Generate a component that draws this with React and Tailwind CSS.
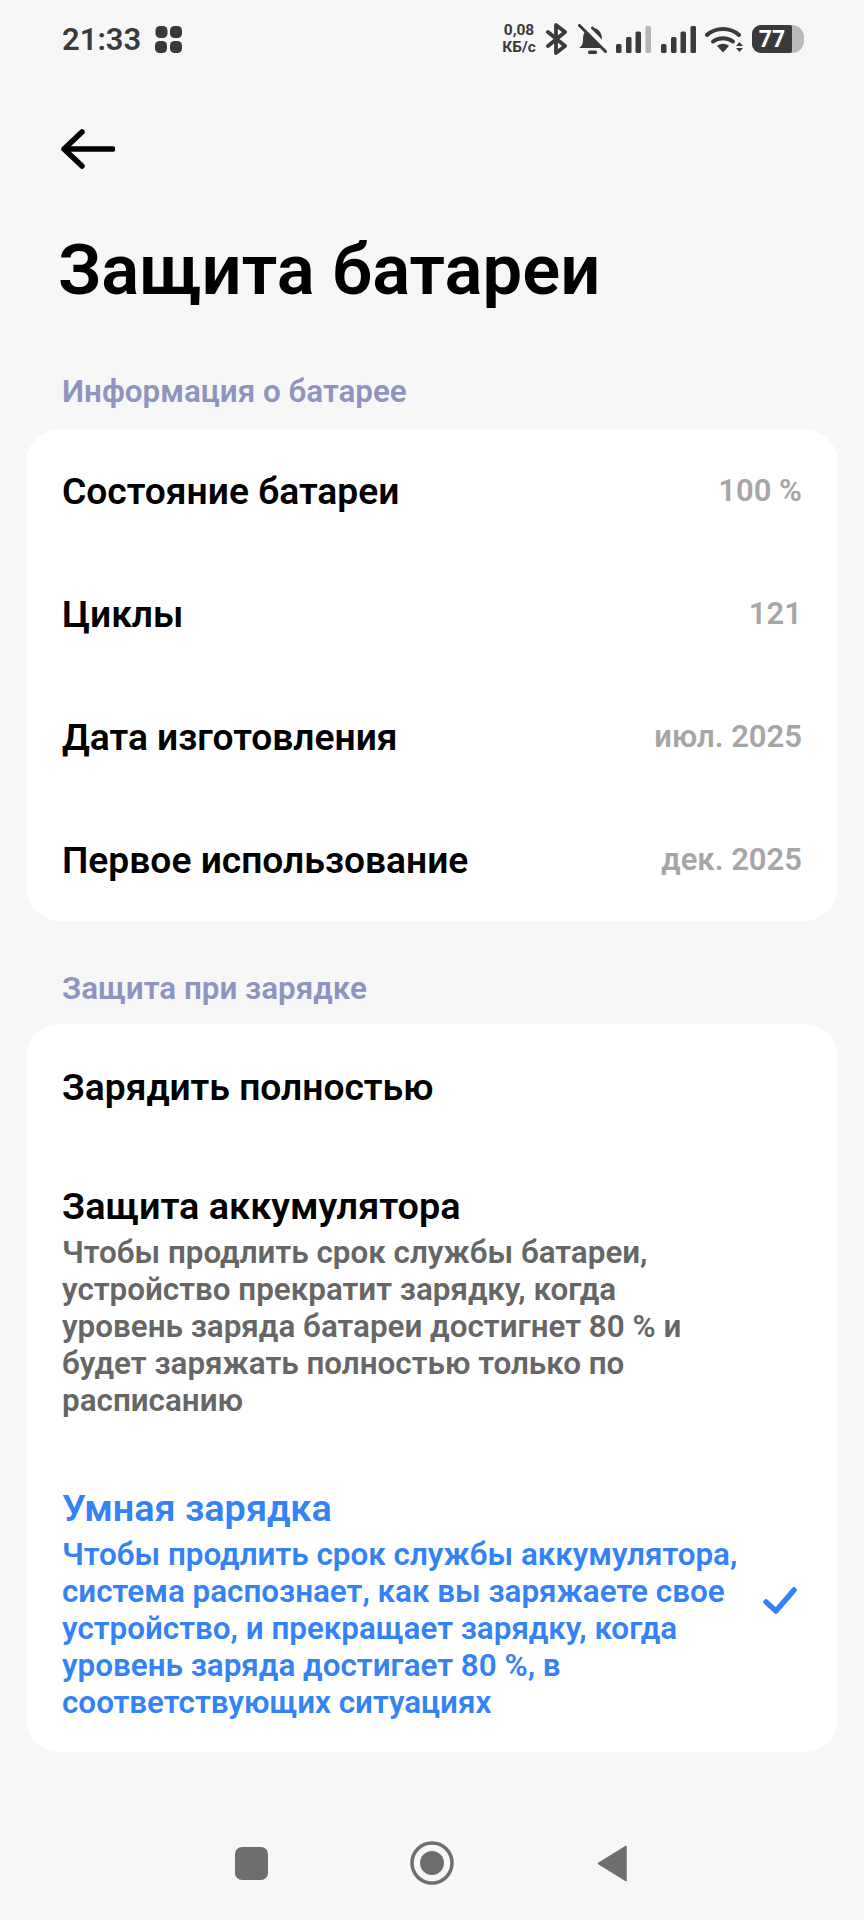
const rows = [
  ["Состояние батареи", "100 %"],
  ["Циклы", "121"],
  ["Дата изготовления", "июл. 2025"],
  ["Первое использование", "дек. 2025"],
];

function Signal({ dim }) {
  return (
    <svg width="35" height="27" viewBox="0 0 35 27">
      <rect x="0" y="18" width="5.500" height="9" rx="1.500" fill="#3a3a3a" />
      <rect x="10" y="11" width="5.500" height="16" rx="1.500" fill="#3a3a3a" />
      <rect x="19.500" y="5.500" width="5.500" height="21.500" rx="1.500" fill="#3a3a3a" />
      <rect x="29.500" y="0" width="5.500" height="27" rx="1.500" fill={dim ? "#b5b5b5" : "#3a3a3a"} />
    </svg>
  );
}

function StatusBar() {
  return (
    <div className="flex h-[78px] items-center justify-between pl-[62px] pr-[60px] text-[#3a3a3a]">
      <div className="flex items-center gap-[14px]">
        <span className="text-[31px] font-semibold leading-none">21:33</span>
        <svg width="27" height="27" viewBox="0 0 27 27" fill="#3a3a3a">
          <rect x="0.500" y="0" width="12" height="12" rx="4.500" />
          <rect x="15" y="0" width="12" height="12" rx="4.500" />
          <rect x="0" y="15" width="12" height="12" rx="4.500" />
          <rect x="15" y="15" width="12" height="12" rx="4.500" />
        </svg>
      </div>
      <div className="flex items-center">
        <div className="flex w-[36px] flex-col items-center text-[15.500px] font-bold leading-[17px]">
          <span>0,08</span>
          <span>КБ/с</span>
        </div>
        <svg className="ml-[9px]" width="21" height="32" viewBox="0 0 21 32" fill="none" stroke="#3a3a3a" strokeWidth="3.800" strokeLinejoin="round" strokeLinecap="round">
          <path d="M2 9l17 14-9 7V2l9 7L2 23" />
        </svg>
        <svg className="ml-[11px]" width="29" height="31" viewBox="0 0 29 31">
          <path d="M1 24c3-2 4-4 4-9 0-6 3-10 8-11 0-2 3-2 3 0 5 1 8 5 8 11 0 5 1 7 4 9z" fill="#3a3a3a" />
          <rect x="10" y="26.500" width="9" height="3.500" rx="1.500" fill="#3a3a3a" />
          <path d="M2 -2L30 26" stroke="#f7f7f7" strokeWidth="6.500" />
          <path d="M1.500 1.500L27.500 27.500" stroke="#3a3a3a" strokeWidth="3" strokeLinecap="round" />
        </svg>
        <div className="ml-[9px]"><Signal dim /></div>
        <div className="ml-[10px]"><Signal /></div>
        <svg className="ml-[9px]" width="38" height="27" viewBox="0 0 38 27" fill="none">
          <path d="M2 9c9-8 23-8 32 0" stroke="#3a3a3a" strokeWidth="4" strokeLinecap="round" />
          <path d="M8 15.500c6-4.500 14-4.500 20 0" stroke="#3a3a3a" strokeWidth="4" strokeLinecap="round" />
          <path d="M12 20c4-3 8-3 12 0l-6 6.500z" fill="#3a3a3a" />
          <path d="M31 20l3.500-4 3.500 4zM31 22l3.500 4 3.500-4z" fill="#3a3a3a" />
        </svg>
        <div className="ml-[9px] flex h-[28px] w-[52px] items-center overflow-hidden rounded-l-[9px] rounded-r-[12px] bg-[#b9b9b9]">
          <div className="flex h-full w-[40px] items-center justify-center rounded-r-[2px] bg-[#3a3a3a] text-[23px] font-bold leading-none text-white">
            77
          </div>
        </div>
      </div>
    </div>
  );
}

function Option({ title, text, active }) {
  return (
    <div className="flex items-center px-[36px]">
      <div className="w-[680px]">
        <p className={`text-[37.800px] font-semibold leading-[44px] ${active ? "text-[#3482f6]" : "text-black"}`}>{title}</p>
        <p className={`mt-[6px] text-[31.400px] font-semibold leading-[37px] ${active ? "text-[#3482f6]" : "text-[#666666]"}`}>{text}</p>
      </div>
      {active ? (
        <svg className="mb-[6px] ml-auto mr-[5px]" width="34" height="28" viewBox="0 0 34 28" fill="none" stroke="#3482f6" strokeWidth="5.500" strokeLinecap="round" strokeLinejoin="round">
          <path d="M3 15l10 9L31 3" />
        </svg>
      ) : null}
    </div>
  );
}

export default function App() {
  return (
    <div className="flex h-[1920px] w-[864px] flex-col bg-[#f7f7f7] font-['Roboto',sans-serif]">
      <StatusBar />
      <div className="pl-[61px] pt-[51px]">
        <svg width="54" height="40" viewBox="0 0 54 40" fill="none" stroke="#000" strokeWidth="5.500" strokeLinecap="round" strokeLinejoin="round" className="block">
          <path d="M3 20H52M21 3L3 20 21 37" />
        </svg>
      </div>
      <h1 className="mt-[59px] pl-[58px] text-[70.600px] font-semibold leading-[84px] text-black">Защита батареи</h1>
      <h2 className="mt-[62px] pl-[62px] text-[31.400px] font-semibold leading-[36px] text-[#8e94bd]">Информация о батарее</h2>
      <div className="mx-[26px] mt-[19px] rounded-[34px] bg-white">
        {rows.map(([label, value]) => (
          <div key={label} className="flex h-[123px] items-center justify-between px-[36px] pt-[2px]">
            <span className="text-[37.200px] font-semibold text-black">{label}</span>
            <span className="text-[31px] font-semibold text-[#a6a6a6]">{value}</span>
          </div>
        ))}
      </div>
      <h2 className="mt-[50px] pl-[62px] text-[31.400px] font-semibold leading-[36px] text-[#8e94bd]">Защита при зарядке</h2>
      <div className="mx-[26px] mt-[17px] flex h-[728px] flex-col rounded-[34px] bg-white">
        <div className="flex h-[128px] items-center pl-[36px]">
          <span className="text-[37.200px] font-semibold text-black">Зарядить полностью</span>
        </div>
        <div className="mt-[32px]">
          <Option
            title="Защита аккумулятора"
            text="Чтобы продлить срок службы батареи, устройство прекратит зарядку, когда уровень заряда батареи достигнет 80 % и будет заряжать полностью только по расписанию"
          />
        </div>
        <div className="mt-[67px]">
          <Option
            active
            title="Умная зарядка"
            text="Чтобы продлить срок службы аккумулятора, система распознает, как вы заряжаете свое устройство, и прекращает зарядку, когда уровень заряда достигает 80 %, в соответствующих ситуациях"
          />
        </div>
      </div>
      <div className="mt-[89px] flex items-center pl-[235px]">
        <div className="h-[33px] w-[33px] rounded-[7px] bg-[#6e6e6e]" />
        <svg className="ml-[142px]" width="44" height="44" viewBox="0 0 44 44">
          <circle cx="22" cy="22" r="20" fill="none" stroke="#6e6e6e" strokeWidth="3.500" />
          <circle cx="22" cy="22" r="12" fill="#6e6e6e" />
        </svg>
        <svg className="ml-[143px]" width="30" height="37" viewBox="0 0 30 37">
          <path d="M29 1.500v34L1.500 18.500z" fill="#6e6e6e" stroke="#6e6e6e" strokeWidth="1.500" strokeLinejoin="round" />
        </svg>
      </div>
    </div>
  );
}
